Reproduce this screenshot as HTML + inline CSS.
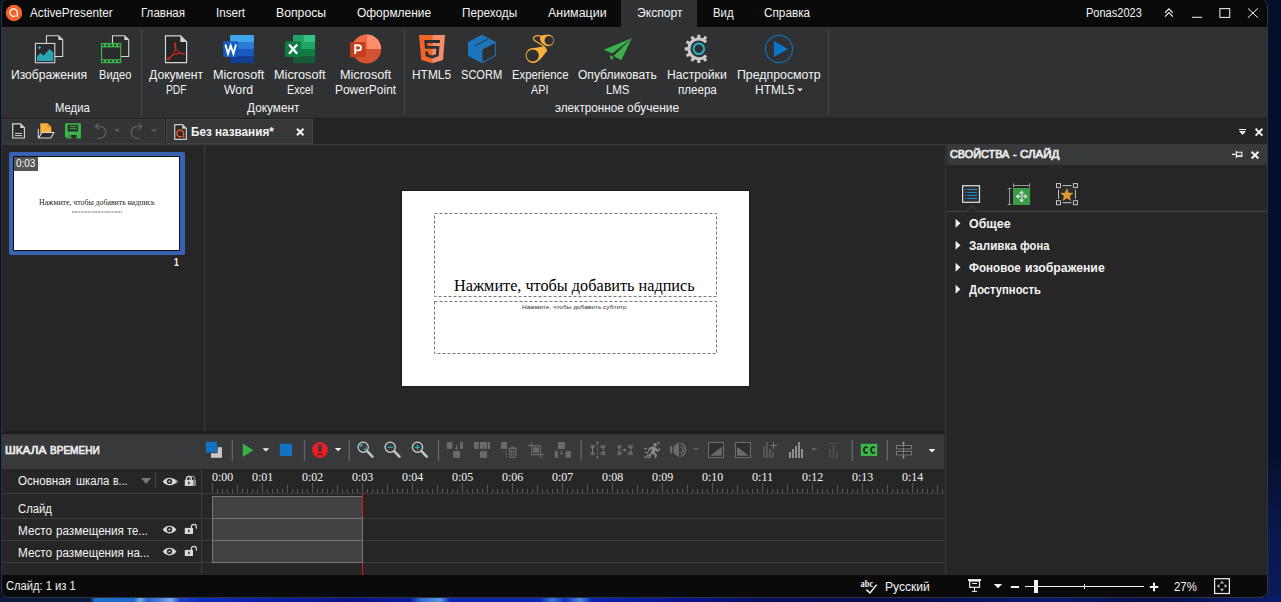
<!DOCTYPE html>
<html><head><meta charset="utf-8"><title>ActivePresenter</title>
<style>
*{margin:0;padding:0;box-sizing:border-box}
html,body{width:1281px;height:602px;overflow:hidden;background:#04102a;font-family:"Liberation Sans",sans-serif}
#wall{position:absolute;left:0;top:0;width:1281px;height:602px;background:#04102a}
#wallb{position:absolute;left:0;top:597px;width:1281px;height:5px;background:linear-gradient(90deg,#0a1a3c 0,#0a1a3c 90px,#1d6fd0 95px,#1c68cc 134px,#6fb4e0 140px,#2a62d0 147px,#4a7ad8 160px,#7ab0e6 171px,#1a40c8 180px,#0c2cc0 200px,#0a1ea8 260px,#08138a 350px,#0a1a9c 410px,#2a6ad0 420px,#5a9ae0 440px,#0a24b4 450px,#0a24b4 540px,#3a7ad8 552px,#0c2cc0 565px,#4a8ae0 580px,#0a22b0 592px,#0a1a9c 640px,#08128a 690px,#070f60 760px,#060d4a 900px,#091870 1040px,#060f4c 1150px,#0a1c6c 1281px)}
#wallr{position:absolute;left:1266px;top:0;width:15px;height:602px;background:linear-gradient(180deg,#04102a 0,#05112c 76%,#08184a 88%,#0b1d5a 100%)}
#win{position:absolute;left:1px;top:-2px;width:1267px;height:600px;border:1px solid #2d3542;border-radius:8px;overflow:hidden;background:#262626}
#win>*{position:absolute}
.abs{position:absolute}
.t{position:absolute;white-space:pre;transform-origin:0 50%;display:block}
svg{position:absolute;overflow:visible}
.r{font-family:"Liberation Serif",serif}
.b{font-weight:700}
.sb{-webkit-text-stroke:0.65px currentColor}

</style></head>
<body>
<div id="wall"></div><div id="wallr"></div><div id="wallb"></div>
<div id="win"><div style="left:-2px;top:1px;width:1281px;height:602px">
<!-- title bar -->
<div class="abs" style="left:0;top:0;width:1281px;height:27px;background:#0a0a0a"></div>
<div class="abs" style="left:621px;top:0;width:76px;height:28px;background:#303133"></div>
<!-- ribbon -->
<div class="abs" style="left:0;top:27px;width:1281px;height:91px;background:#303133"></div>
<div class="abs" style="left:0;top:27px;width:621px;height:1px;background:#353638"></div>
<div class="abs" style="left:697px;top:27px;width:600px;height:1px;background:#353638"></div>
<div class="abs" style="left:141px;top:30px;width:1px;height:85px;background:#47484a"></div>
<div class="abs" style="left:404px;top:30px;width:1px;height:85px;background:#47484a"></div>
<div class="abs" style="left:828px;top:30px;width:1px;height:85px;background:#47484a"></div>
<svg style="left:0;top:0" width="1281" height="602" viewBox="0 0 1281 602">
<!-- logo -->
<circle cx="14" cy="13" r="8.2" fill="#f4622a"/>
<path d="M15.4 15.8 A3.7 3.7 0 1 1 17.3 12.6 V16.9" fill="none" stroke="#fff" stroke-width="1.3"/>
<!-- images icon -->
<path d="M46.5 35.7 H58.7 L62.7 39.7 V56.5 H46.5 Z" fill="#2b2b2c" stroke="#d6d6d6" stroke-width="1.1"/>
<path d="M58.4 35.7 L62.7 40 H58.4 Z" fill="#d6d6d6"/>
<rect x="35.4" y="43.4" width="19.4" height="19.3" fill="#2b2b2c" stroke="#d6d6d6" stroke-width="1.1"/>
<path d="M37 61 V56.2 L40.7 52.9 L43.5 55.7 L49.5 49 L53.2 52.6 V61 Z" fill="#29a5b6"/>
<path d="M39.4 45.9 V49.3 M37.7 47.6 H41.1" stroke="#29a5b6" stroke-width="1"/>
<!-- video icon -->
<path d="M112.5 35.7 H124.7 L128.7 39.7 V56.5 H112.5 Z" fill="#2b2b2c" stroke="#d6d6d6" stroke-width="1.1"/>
<path d="M124.4 35.7 L128.7 40 H124.4 Z" fill="#d6d6d6"/>
<rect x="101" y="43" width="20.2" height="20.2" fill="#3cb54a"/>
<rect x="102.1" y="47.4" width="18" height="11.8" fill="#2b2b2c"/>
<g fill="#2b2b2c"><rect x="102.3" y="44.3" width="1.8" height="1.8"/><rect x="106.3" y="44.3" width="1.8" height="1.8"/><rect x="110.3" y="44.3" width="1.8" height="1.8"/><rect x="114.3" y="44.3" width="1.8" height="1.8"/><rect x="118.3" y="44.3" width="1.8" height="1.8"/>
<rect x="102.3" y="60.3" width="1.8" height="1.8"/><rect x="106.3" y="60.3" width="1.8" height="1.8"/><rect x="110.3" y="60.3" width="1.8" height="1.8"/><rect x="114.3" y="60.3" width="1.8" height="1.8"/><rect x="118.3" y="60.3" width="1.8" height="1.8"/></g>
<!-- pdf -->
<path d="M165.5 35.8 H180.6 L186.6 41.8 V62.6 H165.5 Z" fill="#262627" stroke="#d6d6d6" stroke-width="1.2"/>
<path d="M180.4 35.8 L186.6 42 H180.4 Z" fill="#d6d6d6"/>
<g fill="none" stroke="#e8291f" stroke-width="1" stroke-linecap="round"><path d="M174.7 42.7 C176.6 46.2 176.2 49.6 172 55.4 L168.4 59"/><path d="M174.9 42.9 C173.6 46.6 176.2 50.8 180.6 53.2 L184.2 54"/><path d="M168.6 58.4 C172 54.8 177.4 52.6 184 53.5"/><circle cx="168.6" cy="58.8" r="1.1"/></g>
<!-- word -->
<g><rect x="230.1" y="35" width="23.8" height="7.2" fill="#41a5ee"/><rect x="230.1" y="42" width="23.8" height="7.2" fill="#2b7cd3"/><rect x="230.1" y="49" width="23.8" height="7.2" fill="#185abd"/><rect x="230.1" y="56" width="23.8" height="7.1" fill="#103f91"/>
<rect x="223.1" y="41.2" width="15.2" height="15.9" rx="1.4" fill="#185abd"/>
<path d="M225.4 44.6 L228 53.8 L230.7 45.6 L233.4 53.8 L236 44.6" fill="none" stroke="#fff" stroke-width="1.9" stroke-linejoin="miter"/></g>
<!-- excel -->
<g><rect x="293" y="35" width="11" height="14.2" fill="#21a366"/><rect x="303.8" y="35" width="11.3" height="7.2" fill="#33c481"/><rect x="303.8" y="42" width="11.3" height="7.2" fill="#21a366"/><rect x="293" y="49" width="22.1" height="7.2" fill="#107c41"/><rect x="293" y="56" width="22.1" height="7.1" fill="#185c37"/>
<rect x="285" y="41.2" width="16.2" height="15.8" rx="1.4" fill="#107c41"/>
<path d="M289 44.4 L297.2 53.8 M297.2 44.4 L289 53.8" stroke="#fff" stroke-width="2.3"/></g>
<!-- powerpoint -->
<g><circle cx="366.6" cy="49" r="14.6" fill="#d35230"/><path d="M366.6 49 V34.4 A14.6 14.6 0 0 1 381.2 49 Z" fill="#ff8f6b"/><path d="M366.6 49 V34.4 A14.6 14.6 0 0 0 352 49 Z" fill="#ed6c47"/>
<rect x="350.1" y="42" width="15.5" height="15.3" rx="1.4" fill="#c43e1c"/>
<path d="M355.2 54 V45.2 H358.4 A2.6 2.6 0 0 1 358.4 50.4 H355.2" fill="none" stroke="#fff" stroke-width="1.9"/></g>
<!-- html5 -->
<g><path d="M419 35 H432.2 V63.3 L421.3 60.1 Z" fill="#f16529"/><path d="M432.2 35 H445 L443 60.1 L432.2 63.3 Z" fill="#f58d6c"/>
<path d="M424.2 40.1 H440 L439.8 42.9 H427.2 L427.5 45.9 H439.5 L438.6 56.3 L432.1 58.6 L425.6 56.3 L425.2 51.6 H428 L428.2 54.2 L432.1 55.5 L436 54.2 L436.4 48.7 H425 Z" fill="#2e2f31"/></g>
<!-- scorm -->
<g><path d="M482 34.7 L495.9 42 V55.8 L482 63.3 L468 55.8 V42 Z" fill="#1b75bc"/><path d="M482.4 49.4 L494.9 42.9 V55.3 L482.4 61.8 Z" fill="#2e2f31"/><path d="M475.3 45.6 L487.7 39.1" stroke="#2e2f31" stroke-width="1"/></g>
<!-- xapi -->
<g fill="none" stroke="#fbb03b">
<path d="M533.1 47.9 C537 47.9 541 46.6 543.6 46.2 L547 50.8 C545.4 53 541.8 58 539 60.6 Z" fill="#fbb03b" stroke="none"/>
<circle cx="533.1" cy="55.4" r="7.5" fill="#fbb03b" stroke="none"/>
<circle cx="532.7" cy="55.5" r="6.1" fill="#2e2f31" stroke="none"/>
<circle cx="548.1" cy="40.3" r="5.9" fill="#fbb03b" stroke="none"/>
<path d="M546 34.8 C543 34.6 541 35.6 540.2 37.2 C539.6 39.6 540.8 42.8 543.6 44.6 Z" fill="#fbb03b" stroke="none"/>
<circle cx="549" cy="40.4" r="4.4" fill="#2e2f31" stroke="none"/>
<path d="M541.5 36.1 C538 35.4 534.5 35.8 533.6 37.5 C532.8 39.1 534.4 40.6 537 42 C540.5 44 544.5 46.5 545.8 48.5 C546.6 49.7 546.6 50.6 546.2 51.5" stroke-width="1.2"/>
</g>
<!-- plane -->
<g fill="#3cb04a"><path d="M603.8 49.7 L632 38 L612.3 53.6 Z"/><path d="M632 38 L621.2 60.2 L613.5 55.9 Z"/><path d="M609.6 55 L613.8 57.3 L611.2 60.2 Z"/></g>
<!-- gear placeholder -->
<path d="M707.27 56.43 A11.4 11.4 0 1 1 707.27 41.17 L705.04 43.18 A8.4 8.4 0 1 0 705.04 54.42 Z M705.51 57.39 L707.23 60.23 L704.48 61.81 L702.88 58.91 Z M700.32 59.59 L700.38 62.91 L697.22 62.91 L697.28 59.59 Z M694.72 58.91 L693.12 61.81 L690.37 60.23 L692.09 57.39 Z M690.21 55.51 L687.37 57.23 L685.79 54.48 L688.69 52.88 Z M688.01 50.32 L684.69 50.38 L684.69 47.22 L688.01 47.28 Z M688.69 44.72 L685.79 43.12 L687.37 40.37 L690.21 42.09 Z M692.09 40.21 L690.37 37.37 L693.12 35.79 L694.72 38.69 Z M697.28 38.01 L697.22 34.69 L700.38 34.69 L700.32 38.01 Z M702.88 38.69 L704.48 35.79 L707.23 37.37 L705.51 40.21 Z " fill="#c9c9c9"/>
<circle cx="698.8" cy="48.8" r="5.3" fill="none" stroke="#29b6c9" stroke-width="2"/>
<!-- play -->
<circle cx="779" cy="49" r="13.6" fill="none" stroke="#0d6eb8" stroke-width="1.2"/>
<path d="M773.9 40.7 V57.2 L787.8 49 Z" fill="#0b74c8"/>
<path d="M797.2 88.6 H802.8 L800 91.4 Z" fill="#f2f2f2"/>
</svg>

<!-- toolbar row -->
<div class="abs" style="left:0;top:118px;width:1281px;height:27px;background:#242424"></div>
<div class="abs" style="left:0;top:118px;width:1281px;height:1px;background:#1e1e1e"></div>
<div class="abs" style="left:0;top:144px;width:946px;height:1px;background:#3a3a3a"></div>
<div class="abs" style="left:2px;top:119px;width:163px;height:25px;background:#333436;border:1px solid #3c3d3f;border-left:none"></div>
<div class="abs" style="left:166px;top:119px;width:147px;height:25px;background:#363739;border:1px solid #404143"></div>
<!-- main -->
<div class="abs" style="left:0;top:145px;width:1281px;height:288px;background:#262626"></div>
<div class="abs" style="left:204px;top:145px;width:1px;height:288px;background:#3a3a3a"></div>
<div class="abs" style="left:945px;top:145px;width:1px;height:430px;background:#3a3a3a"></div>

<!-- thumbnail -->
<div class="abs" style="left:9px;top:152px;width:176px;height:103px;background:#3a62b4;border-radius:2px"></div>
<div class="abs" style="left:13px;top:156px;width:167px;height:95px;background:#111"></div>
<div class="abs" style="left:14px;top:157px;width:165px;height:93px;background:#fff"></div>
<div class="abs" style="left:14px;top:157px;width:24px;height:14px;background:#555"></div>
<div class="abs" style="left:72px;top:210.6px;width:50px;height:2.2px;background:repeating-linear-gradient(90deg,#bbb 0,#aaa 1.5px,#e4e4e4 2px,#ccc 3.3px);opacity:.9"></div>
<!-- slide -->
<div class="abs" style="left:401px;top:190px;width:349px;height:197px;background:#1a1a1a"></div>
<div class="abs" style="left:402px;top:191px;width:347px;height:195px;background:#fff"></div>
<svg style="left:434px;top:213px" width="284" height="142" viewBox="0 0 284 142">
<rect x="0.5" y="0.5" width="282" height="83" fill="none" stroke="#777" stroke-width="1" stroke-dasharray="3 2"/>
<rect x="0.5" y="88.5" width="282" height="52" fill="none" stroke="#777" stroke-width="1" stroke-dasharray="3 2"/>
</svg>
<!-- right panel -->
<div class="abs" style="left:947px;top:144px;width:320px;height:21px;background:#38393b"></div>
<div class="abs" style="left:947px;top:211px;width:320px;height:1px;background:#444"></div>
<svg style="left:964px;top:204px" width="16" height="9" viewBox="0 0 16 9"><path d="M0 7.5 L2 7.5 L7.7 1.8 L13.4 7.5 L16 7.5" fill="#262626" stroke="#444" stroke-width="1"/><rect x="2.5" y="8" width="10.5" height="1.2" fill="#262626"/></svg>
<svg style="left:0;top:0" width="1281" height="602" viewBox="0 0 1281 602">
<!-- new doc -->
<path d="M12.7 123.9 H20.6 L24.4 127.7 V138 H12.7 Z" fill="#2a2b2c" stroke="#d6d6d6" stroke-width="1.2"/>
<path d="M20.3 123.9 L24.4 128 H20.3 Z" fill="#d6d6d6"/>
<path d="M15 133.4 H22.1 M15 135.6 H22.1" stroke="#d6d6d6" stroke-width="1"/>
<!-- open -->
<path d="M40.3 123.3 H47.6 L51.3 127 V133.6 H40.3 Z" fill="#fbb03b"/>
<path d="M47.4 123.3 L51.3 127.2 H47.4 Z" fill="#e08a1a"/>
<path d="M38.3 129 V138 H50.7 L53.9 132.5 H42 L38.6 138" fill="#2a2b2c" stroke="#d6d6d6" stroke-width="1.1" stroke-linejoin="miter"/>
<!-- save -->
<path d="M65 123.3 H80.9 V138.6 H67 L65 136.4 Z" fill="#3cb54a"/>
<rect x="67.7" y="124.9" width="10.4" height="6.6" fill="#2a2b2c"/>
<path d="M69.6 126.6 H76.8 M69.6 128.8 H76.8" stroke="#3cb54a" stroke-width="1"/>
<rect x="68.8" y="134.9" width="7.7" height="3.7" fill="#2a2b2c"/>
<rect x="69.4" y="134.9" width="1.7" height="3.7" fill="#3cb54a"/>
<!-- undo -->
<g fill="none" stroke="#5c5d5f" stroke-width="1.3"><path d="M96 126.3 H99.7 A6.05 6.05 0 0 1 99.7 138.4 H97.6"/><path d="M98.4 123.4 L95.4 126.3 L98.4 129.2"/>
<path d="M141 126.3 H137.3 A6.05 6.05 0 0 0 137.3 138.4 H139.4"/><path d="M138.6 123.4 L141.6 126.3 L138.6 129.2"/></g>
<path d="M114 129.3 H120 L117 132.3 Z M151 129.3 H157 L154 132.3 Z" fill="#5c5d5f"/>
<!-- doc tab icon -->
<path d="M174.7 124.6 H182.4 L186.3 128.5 V139.3 H174.7 Z" fill="#2a2b2c" stroke="#d0d0d0" stroke-width="1.2"/>
<path d="M182.2 124.6 L186.3 128.7 H182.2 Z" fill="#d0d0d0"/>
<path d="M181.8 136.4 A3.4 3.4 0 1 1 183.6 133.3 V137.7" fill="none" stroke="#f0582a" stroke-width="1.4"/>
<!-- tab close -->
<path d="M297 128.7 L303.5 135.2 M303.5 128.7 L297 135.2" stroke="#f2f2f2" stroke-width="2"/>
<!-- right controls -->
<rect x="1239" y="129" width="7" height="1" fill="#f2f2f2"/><path d="M1239 131 H1246 L1242.5 135 Z" fill="#f2f2f2"/>
<path d="M1255.6 128.8 L1262.4 135.6 M1262.4 128.8 L1255.6 135.6" stroke="#f2f2f2" stroke-width="2"/>
</svg>

<svg style="left:0;top:0" width="1281" height="602" viewBox="0 0 1281 602">
<!-- pin -->
<path d="M1232 154.4 H1236.2 M1236.4 150.8 V158 M1236.4 152.3 H1241.8 V156.2 H1236.4" fill="none" stroke="#f2f2f2" stroke-width="1.1"/>
<rect x="1236.4" y="155.4" width="6" height="1.4" fill="#f2f2f2"/>
<path d="M1251.6 151.7 L1258.4 158.5 M1258.4 151.7 L1251.6 158.5" stroke="#f2f2f2" stroke-width="2"/>
<!-- icon1 list -->
<rect x="962.6" y="185.7" width="16.9" height="16.6" fill="#303031" stroke="#e0e0e0" stroke-width="1.2"/>
<g stroke="#1e8ad6" stroke-width="1"><path d="M967.3 189.5 H977 M967.3 192.5 H977 M967.3 195.5 H977 M967.3 198.5 H977"/><path d="M965 189.5 H966 M965 192.5 H966 M965 195.5 H966 M965 198.5 H966"/></g>
<!-- icon2 size -->
<rect x="1013" y="188" width="17.1" height="17" fill="#3a9c47"/>
<g stroke="#9a9a9a" stroke-width="1" fill="none"><path d="M1013.5 185.5 H1029.6 M1013.5 183.4 V187.4 M1029.6 183.4 V187.4"/><path d="M1009.5 188.5 V204.5 M1007.6 188.5 H1011.4 M1007.6 204.5 H1011.4"/></g>
<g fill="#dcdcdc"><path d="M1021.6 190.4 L1024.2 193.4 H1022.3 V195.7 H1024.6 V193.8 L1027.6 196.4 L1024.6 199 V197.1 H1022.3 V199.4 H1024.2 L1021.6 202.4 L1019 199.4 H1020.9 V197.1 H1018.6 V199 L1015.6 196.4 L1018.6 193.8 V195.7 H1020.9 V193.4 H1019 Z"/></g>
<rect x="1020.9" y="195.7" width="1.4" height="1.4" fill="#3a9c47"/>
<!-- icon3 star -->
<g fill="none" stroke="#c8c8c8" stroke-width="1"><rect x="1056.5" y="183.6" width="4" height="4"/><rect x="1073.4" y="183.6" width="4" height="4"/><rect x="1056.5" y="200.7" width="4" height="4"/><rect x="1073.4" y="200.7" width="4" height="4"/>
<path d="M1062.5 185.6 H1071.5 M1062.5 202.7 H1071.5 M1058.5 189.6 V198.8 M1075.4 189.6 V198.8"/></g>
<rect x="1060.6" y="187.8" width="12.8" height="12.8" fill="#2e2e2f"/>
<path d="M1066.9 188 L1068.7 192.7 L1073.6 192.9 L1069.8 196.1 L1071.1 200.9 L1066.9 198.2 L1062.7 200.9 L1064 196.1 L1060.2 192.9 L1065.1 192.7 Z" fill="#e09a2d"/>
<!-- tree arrows -->
<path d="M955.6 218.8 L960.4 223.3 L955.6 227.8 Z M955.6 240.8 L960.4 245.3 L955.6 249.8 Z M955.6 262.8 L960.4 267.3 L955.6 271.8 Z M955.6 284.8 L960.4 289.3 L955.6 293.8 Z" fill="#f2f2f2"/>
</svg>


<!-- timeline -->
<div class="abs" style="left:0;top:431px;width:945px;height:3px;background:#1e1e1e"></div>
<div class="abs" style="left:0;top:434px;width:944px;height:35px;background:#38393b"></div>
<div class="abs" style="left:0;top:469px;width:944px;height:106px;background:#262626"></div>

<div class="abs" style="left:201px;top:469px;width:1px;height:106px;background:#3c3c3c"></div>
<div class="abs" style="left:0;top:493px;width:944px;height:1px;background:#3c3c3c"></div>
<div class="abs" style="left:0;top:518px;width:944px;height:1px;background:#3c3c3c"></div>
<div class="abs" style="left:0;top:540px;width:944px;height:1px;background:#3c3c3c"></div>
<div class="abs" style="left:0;top:562px;width:944px;height:1px;background:#3c3c3c"></div>
<svg style="left:0;top:0" width="944" height="500" viewBox="0 0 944 500" fill="#565656" shape-rendering="crispEdges"><rect x="212" y="483" width="1" height="10"/><rect x="217" y="489" width="1" height="4"/><rect x="222" y="489" width="1" height="4"/><rect x="227" y="489" width="1" height="4"/><rect x="232" y="489" width="1" height="4"/><rect x="237" y="485" width="1" height="8"/><rect x="242" y="489" width="1" height="4"/><rect x="247" y="489" width="1" height="4"/><rect x="252" y="489" width="1" height="4"/><rect x="257" y="489" width="1" height="4"/><rect x="262" y="483" width="1" height="10"/><rect x="267" y="489" width="1" height="4"/><rect x="272" y="489" width="1" height="4"/><rect x="277" y="489" width="1" height="4"/><rect x="282" y="489" width="1" height="4"/><rect x="287" y="485" width="1" height="8"/><rect x="292" y="489" width="1" height="4"/><rect x="297" y="489" width="1" height="4"/><rect x="302" y="489" width="1" height="4"/><rect x="307" y="489" width="1" height="4"/><rect x="312" y="483" width="1" height="10"/><rect x="317" y="489" width="1" height="4"/><rect x="322" y="489" width="1" height="4"/><rect x="327" y="489" width="1" height="4"/><rect x="332" y="489" width="1" height="4"/><rect x="337" y="485" width="1" height="8"/><rect x="342" y="489" width="1" height="4"/><rect x="347" y="489" width="1" height="4"/><rect x="352" y="489" width="1" height="4"/><rect x="357" y="489" width="1" height="4"/><rect x="362" y="483" width="1" height="10"/><rect x="367" y="489" width="1" height="4"/><rect x="372" y="489" width="1" height="4"/><rect x="377" y="489" width="1" height="4"/><rect x="382" y="489" width="1" height="4"/><rect x="387" y="485" width="1" height="8"/><rect x="392" y="489" width="1" height="4"/><rect x="397" y="489" width="1" height="4"/><rect x="402" y="489" width="1" height="4"/><rect x="407" y="489" width="1" height="4"/><rect x="412" y="483" width="1" height="10"/><rect x="417" y="489" width="1" height="4"/><rect x="422" y="489" width="1" height="4"/><rect x="427" y="489" width="1" height="4"/><rect x="432" y="489" width="1" height="4"/><rect x="437" y="485" width="1" height="8"/><rect x="442" y="489" width="1" height="4"/><rect x="447" y="489" width="1" height="4"/><rect x="452" y="489" width="1" height="4"/><rect x="457" y="489" width="1" height="4"/><rect x="462" y="483" width="1" height="10"/><rect x="467" y="489" width="1" height="4"/><rect x="472" y="489" width="1" height="4"/><rect x="477" y="489" width="1" height="4"/><rect x="482" y="489" width="1" height="4"/><rect x="487" y="485" width="1" height="8"/><rect x="492" y="489" width="1" height="4"/><rect x="497" y="489" width="1" height="4"/><rect x="502" y="489" width="1" height="4"/><rect x="507" y="489" width="1" height="4"/><rect x="512" y="483" width="1" height="10"/><rect x="517" y="489" width="1" height="4"/><rect x="522" y="489" width="1" height="4"/><rect x="527" y="489" width="1" height="4"/><rect x="532" y="489" width="1" height="4"/><rect x="537" y="485" width="1" height="8"/><rect x="542" y="489" width="1" height="4"/><rect x="547" y="489" width="1" height="4"/><rect x="552" y="489" width="1" height="4"/><rect x="557" y="489" width="1" height="4"/><rect x="562" y="483" width="1" height="10"/><rect x="567" y="489" width="1" height="4"/><rect x="572" y="489" width="1" height="4"/><rect x="577" y="489" width="1" height="4"/><rect x="582" y="489" width="1" height="4"/><rect x="587" y="485" width="1" height="8"/><rect x="592" y="489" width="1" height="4"/><rect x="597" y="489" width="1" height="4"/><rect x="602" y="489" width="1" height="4"/><rect x="607" y="489" width="1" height="4"/><rect x="612" y="483" width="1" height="10"/><rect x="617" y="489" width="1" height="4"/><rect x="622" y="489" width="1" height="4"/><rect x="627" y="489" width="1" height="4"/><rect x="632" y="489" width="1" height="4"/><rect x="637" y="485" width="1" height="8"/><rect x="642" y="489" width="1" height="4"/><rect x="647" y="489" width="1" height="4"/><rect x="652" y="489" width="1" height="4"/><rect x="657" y="489" width="1" height="4"/><rect x="662" y="483" width="1" height="10"/><rect x="667" y="489" width="1" height="4"/><rect x="672" y="489" width="1" height="4"/><rect x="677" y="489" width="1" height="4"/><rect x="682" y="489" width="1" height="4"/><rect x="687" y="485" width="1" height="8"/><rect x="692" y="489" width="1" height="4"/><rect x="697" y="489" width="1" height="4"/><rect x="702" y="489" width="1" height="4"/><rect x="707" y="489" width="1" height="4"/><rect x="712" y="483" width="1" height="10"/><rect x="717" y="489" width="1" height="4"/><rect x="722" y="489" width="1" height="4"/><rect x="727" y="489" width="1" height="4"/><rect x="732" y="489" width="1" height="4"/><rect x="737" y="485" width="1" height="8"/><rect x="742" y="489" width="1" height="4"/><rect x="747" y="489" width="1" height="4"/><rect x="752" y="489" width="1" height="4"/><rect x="757" y="489" width="1" height="4"/><rect x="762" y="483" width="1" height="10"/><rect x="767" y="489" width="1" height="4"/><rect x="772" y="489" width="1" height="4"/><rect x="777" y="489" width="1" height="4"/><rect x="782" y="489" width="1" height="4"/><rect x="787" y="485" width="1" height="8"/><rect x="792" y="489" width="1" height="4"/><rect x="797" y="489" width="1" height="4"/><rect x="802" y="489" width="1" height="4"/><rect x="807" y="489" width="1" height="4"/><rect x="812" y="483" width="1" height="10"/><rect x="817" y="489" width="1" height="4"/><rect x="822" y="489" width="1" height="4"/><rect x="827" y="489" width="1" height="4"/><rect x="832" y="489" width="1" height="4"/><rect x="837" y="485" width="1" height="8"/><rect x="842" y="489" width="1" height="4"/><rect x="847" y="489" width="1" height="4"/><rect x="852" y="489" width="1" height="4"/><rect x="857" y="489" width="1" height="4"/><rect x="862" y="483" width="1" height="10"/><rect x="867" y="489" width="1" height="4"/><rect x="872" y="489" width="1" height="4"/><rect x="877" y="489" width="1" height="4"/><rect x="882" y="489" width="1" height="4"/><rect x="887" y="485" width="1" height="8"/><rect x="892" y="489" width="1" height="4"/><rect x="897" y="489" width="1" height="4"/><rect x="902" y="489" width="1" height="4"/><rect x="907" y="489" width="1" height="4"/><rect x="912" y="483" width="1" height="10"/><rect x="917" y="489" width="1" height="4"/><rect x="922" y="489" width="1" height="4"/><rect x="927" y="489" width="1" height="4"/><rect x="932" y="489" width="1" height="4"/><rect x="937" y="485" width="1" height="8"/><rect x="942" y="489" width="1" height="4"/></svg>
<div class="abs" style="left:212px;top:496px;width:151px;height:67px;background:#424242;border:1px solid #777"></div>
<div class="abs" style="left:212px;top:518px;width:151px;height:1px;background:#777"></div>
<div class="abs" style="left:212px;top:540px;width:151px;height:1px;background:#777"></div>
<div class="abs" style="left:362px;top:494px;width:1px;height:22px;background:#e81414"></div>
<div class="abs" style="left:362px;top:563px;width:1px;height:12px;background:#e81414"></div>
<div class="abs" style="left:155px;top:472px;width:1px;height:16px;background:#444"></div>
<svg style="left:0;top:0" width="1281" height="602" viewBox="0 0 1281 602">
<!-- separators -->
<g fill="#626365"><rect x="231.6" y="440" width="1.4" height="21"/><rect x="303.8" y="440" width="1.4" height="21"/><rect x="348.6" y="440" width="1.4" height="21"/><rect x="437.8" y="440" width="1.4" height="21"/><rect x="580.4" y="440" width="1.4" height="21"/><rect x="851.6" y="440" width="1.4" height="21"/><rect x="886.6" y="440" width="1.4" height="21"/></g>
<!-- layers icon -->
<rect x="211" y="447.2" width="11" height="10.6" fill="#c8c8c8"/>
<rect x="205" y="441.2" width="12.6" height="12" fill="#38393b"/>
<rect x="205.7" y="441.8" width="11.2" height="10.7" fill="#1273c4"/>
<!-- play -->
<path d="M242.8 443.6 V457 L253.4 450.3 Z" fill="#3cb043"/>
<path d="M262.6 448.3 H269.2 L265.9 451.4 Z" fill="#f2f2f2"/>
<rect x="279.9" y="443.7" width="12.1" height="12.3" fill="#1273c4"/>
<!-- record -->
<circle cx="320" cy="450" r="7.9" fill="#ee1c24"/>
<rect x="318.2" y="444.2" width="3.6" height="7.5" rx="1.6" fill="#3a3b3d"/>
<rect x="317.2" y="453.8" width="5.6" height="1" fill="#3a2a2c"/><rect x="319.2" y="453" width="1.6" height="1" fill="#3a2a2c"/>
<path d="M334.8 448.1 H341.3 L338.05 451.3 Z" fill="#f2f2f2"/>
<!-- zoom icons -->
<g fill="none" stroke="#d0d0d0" stroke-width="1.3"><circle cx="363.2" cy="447.2" r="5.1"/><circle cx="390.2" cy="447.2" r="5.1"/><circle cx="417.5" cy="447.2" r="5.1"/></g>
<g stroke="#c4c4c4" stroke-width="2.6" stroke-linecap="round"><path d="M367.4 451.4 L372.4 456.6 M394.4 451.4 L399.4 456.6 M421.7 451.4 L426.7 456.6"/></g>
<g stroke="#29b6c9" stroke-width="1.1" fill="none"><path d="M360.8 447 V444.9 H363 M365.6 447.4 V449.5 H363.4"/><path d="M387.6 447.2 H392.8"/><path d="M414.9 447.2 H420.1 M417.5 444.6 V449.8"/></g>
<!-- edit group (disabled gray) -->
<g fill="#6a6a6b">
<rect x="446.9" y="442" width="5.4" height="6.9"/><rect x="460.2" y="442" width="2.8" height="6.9"/><rect x="453.1" y="451.1" width="6.9" height="6.8"/><path d="M456 445 H457 V448 H458.4 L456.5 450 L454.6 448 H456 Z"/>
<rect x="473.9" y="442" width="4.9" height="6.9"/><rect x="479.9" y="442" width="7.1" height="6.9"/><rect x="487.8" y="442" width="2.2" height="6.9"/><rect x="479.9" y="451.1" width="7.1" height="6.8"/>
<rect x="501" y="442" width="6" height="6.9"/><rect x="505.8" y="450.3" width="1" height="1.8"/><rect x="505.8" y="453.2" width="1" height="1.8"/><rect x="505.8" y="456.1" width="1" height="1.8"/>
<rect x="558" y="442" width="6.9" height="6.9"/><rect x="554.8" y="451.1" width="3" height="6.8"/><rect x="565.5" y="451.1" width="5.4" height="6.8"/><path d="M561 450 H562 V453 H563.4 L561.5 455 L559.6 453 H561 Z"/>
<rect x="533.1" y="447.3" width="5.8" height="5.6"/>
</g>
<path d="M483 445 H484 V448 H485.4 L483.5 450 L481.6 448 H483 Z" fill="#555"/>
<g fill="none" stroke="#6a6a6b" stroke-width="1.1"><path d="M531.6 442 V454.6 H543.8 M528 445.6 H540.5 V457.9"/>
<path d="M509.6 448.4 H515.8 V456.6 A0.8 0.8 0 0 1 515 457.4 H510.4 A0.8 0.8 0 0 1 509.6 456.6 Z M508.4 448.2 H517 M511 447.2 H514.4 M511.7 450 V455.8 M513.7 450 V455.8"/></g>
<!-- film split icons -->
<g fill="none" stroke="#767677" stroke-width="1"><path d="M590 445.8 H595 M590 454.3 H595 M592.5 445.8 V454.3 M590.5 447.6 H594.5 M590.5 452.5 H594.5"/><path d="M600.2 445.8 H605.6 M600.2 454.3 H605.6 M603.6 445.8 V454.3 M600.6 447.6 H605.2 M600.6 452.5 H605.2"/>
<path d="M597.4 444 V456" stroke-dasharray="1 1"/><path d="M596 442.6 H598.8 M597.4 441.4 V443.8 M596 457.2 H598.8 M597.4 456 V458.4"/>
<path d="M617.2 445.8 H621.8 M617.2 454.3 H621.8 M619.2 445.8 V454.3 M617.6 447.6 H621.4 M617.6 452.5 H621.4"/><path d="M627.6 445.8 H633 M627.6 454.3 H633 M631 445.8 V454.3 M628 447.6 H632.6 M628 452.5 H632.6"/></g>
<path d="M621.8 449.5 H624 V448 L626.4 450 L624 452 V450.5 H621.8 Z" fill="#767677"/>
<!-- runner -->
<g fill="#8c8c8d"><circle cx="655.2" cy="444.6" r="1.7"/><path d="M649.5 447.6 L653.6 446.2 L656.4 447.8 L657.4 450 L659.8 448 L660.6 449 L657.6 452 L655.4 450.4 L654.4 452.6 L657 454.6 L656.2 458 H654.6 L655 455.4 L652 453.4 L651 455.8 H646.6 V454.4 H650 L652.4 448.8 L650.2 449.4 L649 451.6 L647.8 451 Z"/>
<rect x="644" y="448.2" width="3" height="1"/><rect x="645" y="452" width="3.4" height="1"/><rect x="644" y="456.6" width="7" height="1.1"/><path d="M658.4 441.4 L658.9 442.6 L660.1 443.1 L658.9 443.6 L658.4 444.8 L657.9 443.6 L656.7 443.1 L657.9 442.6 Z"/></g>
<!-- speaker -->
<g fill="#6a6a6b"><rect x="670" y="446.2" width="2" height="7"/><path d="M673.4 446.6 L679 442 V457.6 L673.4 453 Z"/></g>
<g fill="none" stroke="#6a6a6b" stroke-width="1.5"><path d="M680.6 446.4 A3.6 3.6 0 0 1 680.6 453.2"/><path d="M680.8 443.2 A7 7 0 0 1 680.8 456.4"/></g>
<path d="M693 448 H699 L696 451 Z M811 448 H817 L814 451 Z" fill="#5e5e5f"/>
<!-- fades -->
<rect x="708.5" y="442.5" width="15" height="15" fill="#2f2f30" stroke="#6e6e6f" stroke-width="1"/><path d="M710.2 455.8 H721.8 V446.8 Z" fill="#6a6a6b"/>
<rect x="735.4" y="442.5" width="15" height="15" fill="#2f2f30" stroke="#6e6e6f" stroke-width="1"/><path d="M737 446.8 V455.8 H748.8 Z" fill="#6a6a6b"/>
<!-- bars -->
<g fill="#565657"><rect x="763" y="446" width="2" height="12"/><rect x="766" y="442" width="2" height="16"/><rect x="769" y="449" width="2" height="9"/><rect x="772" y="452" width="2" height="6"/></g>
<path d="M773.6 442.2 V448.8 M770.4 445.5 H776.8" stroke="#7a7a7b" stroke-width="1"/>
<g fill="#8e8e8f"><rect x="789" y="452" width="2" height="6"/><rect x="792" y="449" width="2" height="9"/><rect x="795" y="446" width="2" height="12"/><rect x="798" y="442" width="2" height="16"/><rect x="801" y="449" width="2" height="9"/></g>
<g fill="#4d4d4e"><rect x="828" y="443" width="10" height="1"/><rect x="829" y="449" width="2" height="9"/><rect x="832.5" y="445" width="2" height="13"/><rect x="836" y="452" width="2" height="6"/><rect x="839.5" y="442.5" width="1" height="1"/></g>
<!-- CC -->
<rect x="860.8" y="443.8" width="16.4" height="12.2" fill="#3cb54a"/>
<g fill="none" stroke="#1c261d" stroke-width="1.7"><path d="M867.6 448 A2.1 3 0 1 0 867.6 452"/><path d="M874.8 448 A2.1 3 0 1 0 874.8 452"/></g>
<!-- align icon -->
<g fill="#2c2c2d" stroke="#7a7a7b" stroke-width="1"><rect x="896.5" y="445.5" width="15" height="3.4"/><rect x="896.5" y="451.5" width="15" height="3.4"/></g>
<path d="M903.5 443.5 V457" stroke="#9a9a9b" stroke-width="1" stroke-dasharray="1.2 1"/><path d="M902.2 443 H904.8 M903.5 441.8 V444.2 M902.2 457.2 H904.8 M903.5 456 V458.4" stroke="#9a9a9b" stroke-width="1"/>
<path d="M928.7 449 H935.3 L932 452.4 Z" fill="#f2f2f2"/>
<!-- track column icons -->
<path d="M141 478 H151.2 L146.1 484 Z" fill="#77787a"/>
<!-- eyes -->
<g id="eye0"><path d="M165.2 481.6 C167.4 477.6 175.8 477.6 178.2 481.6 C175.8 485.8 167.4 485.8 165.2 481.6 Z" fill="#8a8a8a"/><path d="M162.8 481.5 C165.6 476.4 173.6 476.4 176.3 481.5 C173.6 486.6 165.6 486.6 162.8 481.5 Z" fill="#dadada"/><circle cx="169.5" cy="481.4" r="2.7" fill="#2a2a2a"/><circle cx="169.5" cy="481.4" r="1" fill="#dadada"/></g>
<g><path d="M162.8 529.6 C165.6 524.5 173.6 524.5 176.3 529.6 C173.6 534.7 165.6 534.7 162.8 529.6 Z" fill="#dadada"/><circle cx="169.5" cy="529.5" r="2.7" fill="#2a2a2a"/><circle cx="169.5" cy="529.5" r="1" fill="#dadada"/></g>
<g><path d="M162.8 551.6 C165.6 546.5 173.6 546.5 176.3 551.6 C173.6 556.7 165.6 556.7 162.8 551.6 Z" fill="#dadada"/><circle cx="169.5" cy="551.5" r="2.7" fill="#2a2a2a"/><circle cx="169.5" cy="551.5" r="1" fill="#dadada"/></g>
<!-- locks -->
<g><rect x="188" y="479.9" width="8" height="6" fill="#8a8a8a"/><path d="M189.6 480 V478.6 A2.5 2.5 0 0 1 194.6 478.6 V480" fill="none" stroke="#8a8a8a" stroke-width="1.2"/>
<rect x="184.8" y="479.9" width="8.2" height="6" fill="#dadada"/><path d="M186.4 480 V478.8 A2.5 2.5 0 0 1 191.4 478.8 V480" fill="none" stroke="#dadada" stroke-width="1.3"/><rect x="188.2" y="481.6" width="1.4" height="2.6" fill="#2a2a2a"/></g>
<g><rect x="184.8" y="527.9" width="8.2" height="6.1" fill="#dadada"/><path d="M191.4 528 V526.8 A2.5 2.5 0 0 1 196.4 526.8 V528.4" fill="none" stroke="#dadada" stroke-width="1.2"/><rect x="188.2" y="529.6" width="1.4" height="2.6" fill="#2a2a2a"/></g>
<g><rect x="184.8" y="549.9" width="8.2" height="6.1" fill="#dadada"/><path d="M191.4 550 V548.8 A2.5 2.5 0 0 1 196.4 548.8 V550.4" fill="none" stroke="#dadada" stroke-width="1.2"/><rect x="188.2" y="551.6" width="1.4" height="2.6" fill="#2a2a2a"/></g>
</svg>


<!-- status -->
<div class="abs" style="left:0;top:575px;width:1281px;height:27px;background:#0a0a0a"></div>
<svg style="left:0;top:0" width="1281" height="602" viewBox="0 0 1281 602">
<!-- window controls -->
<g fill="none" stroke="#f2f2f2" stroke-width="1.2"><path d="M1165 12.8 L1168.9 8.9 L1172.8 12.8 M1165 16.6 L1168.9 12.7 L1172.8 16.6"/></g>
<rect x="1192" y="16.8" width="10" height="1" fill="#f2f2f2"/>
<rect x="1219.9" y="8.6" width="9.8" height="8.8" fill="none" stroke="#f2f2f2" stroke-width="1"/>
<path d="M1247.9 8.4 L1257.9 17.7 M1257.9 8.4 L1247.9 17.7" stroke="#f2f2f2" stroke-width="1"/>
<!-- abc check -->
<text x="860.6" y="586.9" font-family="'Liberation Serif',serif" font-size="9.5" font-weight="700" fill="#f2f2f2" textLength="12.6" lengthAdjust="spacingAndGlyphs">abc</text>
<path d="M866.3 589.6 L870 593 L876.7 584.6" fill="none" stroke="#f2f2f2" stroke-width="1.5"/>
<!-- presentation -->
<rect x="968" y="579.1" width="13.1" height="1.9" fill="#f2f2f2"/>
<rect x="969.7" y="581" width="9.8" height="6.3" fill="none" stroke="#f2f2f2" stroke-width="1.2"/>
<path d="M972.2 583.5 H977 M974.5 587.8 V591 M971.9 591.4 H977" stroke="#f2f2f2" stroke-width="1"/>
<path d="M993.8 584.1 H1002.2 L998 588.3 Z" fill="#f2f2f2"/>
<rect x="1010.8" y="586" width="8.2" height="2" fill="#f2f2f2"/>
<rect x="1025" y="586" width="119" height="1" fill="#f2f2f2"/>
<rect x="1034" y="580" width="4" height="13" fill="#f2f2f2"/>
<rect x="1084" y="584" width="1" height="5" fill="#f2f2f2"/>
<path d="M1149.8 587 H1158.2 M1154 582.8 V591.2" stroke="#f2f2f2" stroke-width="2"/>
<rect x="1214.6" y="578.7" width="14.8" height="14.8" fill="none" stroke="#f2f2f2" stroke-width="1.2"/>
<path d="M1222 580.8 L1224 583.4 H1220 Z M1222 591.4 L1224 588.8 H1220 Z M1216.8 586.1 L1219.4 584.1 V588.1 Z M1227.2 586.1 L1224.6 584.1 V588.1 Z" fill="#c4c4c4"/>
</svg>


</div></div>

<span class="t" style="left:29.7px;top:6.00px;font-size:12px;line-height:14px;color:#f4f4f4;transform:scaleX(0.9752)">ActivePresenter</span>
<span class="t" style="left:141.2px;top:6.00px;font-size:12px;line-height:14px;color:#f4f4f4;transform:scaleX(0.9653)">Главная</span>
<span class="t" style="left:216.2px;top:6.00px;font-size:12px;line-height:14px;color:#f4f4f4;transform:scaleX(0.9695)">Insert</span>
<span class="t" style="left:276.2px;top:6.00px;font-size:12px;line-height:14px;color:#f4f4f4;transform:scaleX(1.0192)">Вопросы</span>
<span class="t" style="left:357.2px;top:6.00px;font-size:12px;line-height:14px;color:#f4f4f4;transform:scaleX(0.9948)">Оформление</span>
<span class="t" style="left:462.2px;top:6.00px;font-size:12px;line-height:14px;color:#f4f4f4;transform:scaleX(0.9787)">Переходы</span>
<span class="t" style="left:547.7px;top:6.00px;font-size:12px;line-height:14px;color:#f4f4f4;transform:scaleX(1.0363)">Анимации</span>
<span class="t" style="left:636.7px;top:6.00px;font-size:12px;line-height:14px;color:#f4f4f4;transform:scaleX(1.0112)">Экспорт</span>
<span class="t" style="left:712.7px;top:6.00px;font-size:12px;line-height:14px;color:#f4f4f4;transform:scaleX(0.9485)">Вид</span>
<span class="t" style="left:764.2px;top:6.00px;font-size:12px;line-height:14px;color:#f4f4f4;transform:scaleX(0.9792)">Справка</span>
<span class="t" style="left:1085.9px;top:6.00px;font-size:12px;line-height:14px;color:#f4f4f4;transform:scaleX(0.9188)">Ponas2023</span>
<span class="t" style="left:11.1px;top:68.00px;font-size:12px;line-height:14px;color:#f4f4f4;transform:scaleX(1.0090)">Изображения</span>
<span class="t" style="left:99.4px;top:68.00px;font-size:12px;line-height:14px;color:#f4f4f4;transform:scaleX(0.9241)">Видео</span>
<span class="t" style="left:148.9px;top:68.00px;font-size:12px;line-height:14px;color:#f4f4f4;transform:scaleX(1.0144)">Документ</span>
<span class="t" style="left:213.1px;top:68.00px;font-size:12px;line-height:14px;color:#f4f4f4;transform:scaleX(1.0516)">Microsoft</span>
<span class="t" style="left:274.0px;top:68.00px;font-size:12px;line-height:14px;color:#f4f4f4;transform:scaleX(1.0598)">Microsoft</span>
<span class="t" style="left:340.0px;top:68.00px;font-size:12px;line-height:14px;color:#f4f4f4;transform:scaleX(1.0537)">Microsoft</span>
<span class="t" style="left:412.2px;top:68.00px;font-size:12px;line-height:14px;color:#f4f4f4;transform:scaleX(0.9938)">HTML5</span>
<span class="t" style="left:461.0px;top:68.00px;font-size:12px;line-height:14px;color:#f4f4f4;transform:scaleX(0.9223)">SCORM</span>
<span class="t" style="left:512.0px;top:68.00px;font-size:12px;line-height:14px;color:#f4f4f4;transform:scaleX(0.9409)">Experience</span>
<span class="t" style="left:578.3px;top:68.00px;font-size:12px;line-height:14px;color:#f4f4f4;transform:scaleX(1.0042)">Опубликовать</span>
<span class="t" style="left:667.2px;top:68.00px;font-size:12px;line-height:14px;color:#f4f4f4;transform:scaleX(1.0146)">Настройки</span>
<span class="t" style="left:736.7px;top:68.00px;font-size:12px;line-height:14px;color:#f4f4f4;transform:scaleX(1.0284)">Предпросмотр</span>
<span class="t" style="left:166.3px;top:83.00px;font-size:12px;line-height:14px;color:#f4f4f4;transform:scaleX(0.8583)">PDF</span>
<span class="t" style="left:224.3px;top:83.00px;font-size:12px;line-height:14px;color:#f4f4f4;transform:scaleX(1.0227)">Word</span>
<span class="t" style="left:287.2px;top:83.00px;font-size:12px;line-height:14px;color:#f4f4f4;transform:scaleX(0.8929)">Excel</span>
<span class="t" style="left:335.0px;top:83.00px;font-size:12px;line-height:14px;color:#f4f4f4;transform:scaleX(0.9955)">PowerPoint</span>
<span class="t" style="left:531.2px;top:83.00px;font-size:12px;line-height:14px;color:#f4f4f4;transform:scaleX(0.8995)">API</span>
<span class="t" style="left:606.3px;top:83.00px;font-size:12px;line-height:14px;color:#f4f4f4;transform:scaleX(0.9519)">LMS</span>
<span class="t" style="left:678.4px;top:83.00px;font-size:12px;line-height:14px;color:#f4f4f4;transform:scaleX(0.9651)">плеера</span>
<span class="t" style="left:754.9px;top:83.00px;font-size:12px;line-height:14px;color:#f4f4f4;transform:scaleX(0.9989)">HTML5</span>
<span class="t" style="left:55.3px;top:101.00px;font-size:12px;line-height:14px;color:#f4f4f4;transform:scaleX(0.9398)">Медиа</span>
<span class="t" style="left:246.8px;top:101.00px;font-size:12px;line-height:14px;color:#f4f4f4;transform:scaleX(0.9843)">Документ</span>
<span class="t" style="left:554.6px;top:101.00px;font-size:12px;line-height:14px;color:#f4f4f4;transform:scaleX(0.9790)">электронное</span>
<span class="t" style="left:627.1px;top:101.00px;font-size:12px;line-height:14px;color:#f4f4f4;transform:scaleX(0.9996)">обучение</span>
<span class="t b" style="left:191.1px;top:125.00px;font-size:12px;line-height:14px;color:#f4f4f4;transform:scaleX(0.9761)">Без названия*</span>
<span class="t sb" style="left:950.0px;top:148.00px;font-size:11.5px;line-height:12px;color:#f0f0f0;transform:scaleX(0.9451)">СВОЙСТВА</span>
<span class="t sb" style="left:1013.0px;top:148.00px;font-size:11.5px;line-height:12px;color:#f0f0f0;transform:scaleX(0.9561)">-</span>
<span class="t sb" style="left:1019.7px;top:148.00px;font-size:11.5px;line-height:12px;color:#f0f0f0;transform:scaleX(1.0069)">СЛАЙД</span>
<span class="t b" style="left:968.9px;top:217.00px;font-size:12px;line-height:14px;color:#f4f4f4;transform:scaleX(1.0343)">Общее</span>
<span class="t b" style="left:968.9px;top:239.00px;font-size:12px;line-height:14px;color:#f4f4f4;transform:scaleX(0.9685)">Заливка</span>
<span class="t b" style="left:1020.0px;top:239.00px;font-size:12px;line-height:14px;color:#f4f4f4;transform:scaleX(0.9306)">фона</span>
<span class="t b" style="left:968.9px;top:261.00px;font-size:12px;line-height:14px;color:#f4f4f4;transform:scaleX(0.9686)">Фоновое</span>
<span class="t b" style="left:1024.6px;top:261.00px;font-size:12px;line-height:14px;color:#f4f4f4;transform:scaleX(1.0202)">изображение</span>
<span class="t b" style="left:968.9px;top:283.00px;font-size:12px;line-height:14px;color:#f4f4f4;transform:scaleX(0.9351)">Доступность</span>
<span class="t" style="left:15.6px;top:158.00px;font-size:10px;line-height:11px;color:#ffffff;transform:scaleX(0.9913)">0:03</span>
<span class="t b" style="left:173.9px;top:256.00px;font-size:10.5px;line-height:12px;color:#ffffff;transform:scaleX(0.8086)">1</span>
<span class="t r" style="left:39.3px;top:198.00px;font-size:7.6px;line-height:9px;color:#222;transform:scaleX(1.0261)">Нажмите, чтобы добавить надпись</span>
<span class="t r" style="left:454.4px;top:277.00px;font-size:16px;line-height:17px;color:#000;transform:scaleX(1.0138)">Нажмите, чтобы добавить надпись</span>
<span class="t" style="left:522.2px;top:304.00px;font-size:6px;line-height:6px;color:#333;transform:scaleX(1.0869)">Нажмите, чтобы добавить субтитр</span>
<span class="t sb" style="left:5.4px;top:444.00px;font-size:11.5px;line-height:12px;color:#f0f0f0;transform:scaleX(1.0219)">ШКАЛА</span>
<span class="t sb" style="left:50.3px;top:444.00px;font-size:11.5px;line-height:12px;color:#f0f0f0;transform:scaleX(0.8739)">ВРЕМЕНИ</span>
<span class="t" style="left:18.0px;top:474.00px;font-size:12px;line-height:14px;color:#f4f4f4;transform:scaleX(0.9651)">Основная</span>
<span class="t" style="left:75.8px;top:474.00px;font-size:12px;line-height:14px;color:#f4f4f4;transform:scaleX(0.9380)">шкала</span>
<span class="t" style="left:112.7px;top:474.00px;font-size:12px;line-height:14px;color:#f4f4f4;transform:scaleX(0.8724)">в...</span>
<span class="t" style="left:18.0px;top:502.00px;font-size:12px;line-height:14px;color:#f4f4f4;transform:scaleX(0.9377)">Слайд</span>
<span class="t" style="left:18.0px;top:524.00px;font-size:12px;line-height:14px;color:#f4f4f4;transform:scaleX(0.9787)">Место</span>
<span class="t" style="left:56.2px;top:524.00px;font-size:12px;line-height:14px;color:#f4f4f4;transform:scaleX(0.9715)">размещения</span>
<span class="t" style="left:126.8px;top:524.00px;font-size:12px;line-height:14px;color:#f4f4f4;transform:scaleX(0.9389)">те...</span>
<span class="t" style="left:18.0px;top:546.00px;font-size:12px;line-height:14px;color:#f4f4f4;transform:scaleX(0.9787)">Место</span>
<span class="t" style="left:56.2px;top:546.00px;font-size:12px;line-height:14px;color:#f4f4f4;transform:scaleX(0.9715)">размещения</span>
<span class="t" style="left:126.8px;top:546.00px;font-size:12px;line-height:14px;color:#f4f4f4;transform:scaleX(0.9651)">на...</span>
<span class="t r" style="left:212.1px;top:470.00px;font-size:12px;line-height:14px;color:#f4f4f4;transform:scaleX(0.9886)">0:00</span>
<span class="t r" style="left:251.8px;top:470.00px;font-size:12px;line-height:14px;color:#f4f4f4;transform:scaleX(0.9933)">0:01</span>
<span class="t r" style="left:301.8px;top:470.00px;font-size:12px;line-height:14px;color:#f4f4f4;transform:scaleX(0.9933)">0:02</span>
<span class="t r" style="left:351.8px;top:470.00px;font-size:12px;line-height:14px;color:#f4f4f4;transform:scaleX(0.9933)">0:03</span>
<span class="t r" style="left:401.8px;top:470.00px;font-size:12px;line-height:14px;color:#f4f4f4;transform:scaleX(0.9933)">0:04</span>
<span class="t r" style="left:451.8px;top:470.00px;font-size:12px;line-height:14px;color:#f4f4f4;transform:scaleX(0.9933)">0:05</span>
<span class="t r" style="left:501.8px;top:470.00px;font-size:12px;line-height:14px;color:#f4f4f4;transform:scaleX(0.9933)">0:06</span>
<span class="t r" style="left:551.8px;top:470.00px;font-size:12px;line-height:14px;color:#f4f4f4;transform:scaleX(0.9933)">0:07</span>
<span class="t r" style="left:601.8px;top:470.00px;font-size:12px;line-height:14px;color:#f4f4f4;transform:scaleX(0.9933)">0:08</span>
<span class="t r" style="left:651.8px;top:470.00px;font-size:12px;line-height:14px;color:#f4f4f4;transform:scaleX(0.9933)">0:09</span>
<span class="t r" style="left:701.8px;top:470.00px;font-size:12px;line-height:14px;color:#f4f4f4;transform:scaleX(0.9933)">0:10</span>
<span class="t r" style="left:751.8px;top:470.00px;font-size:12px;line-height:14px;color:#f4f4f4;transform:scaleX(1.0148)">0:11</span>
<span class="t r" style="left:801.8px;top:470.00px;font-size:12px;line-height:14px;color:#f4f4f4;transform:scaleX(0.9933)">0:12</span>
<span class="t r" style="left:851.8px;top:470.00px;font-size:12px;line-height:14px;color:#f4f4f4;transform:scaleX(0.9933)">0:13</span>
<span class="t r" style="left:901.8px;top:470.00px;font-size:12px;line-height:14px;color:#f4f4f4;transform:scaleX(0.9933)">0:14</span>
<span class="t" style="left:5.9px;top:579.00px;font-size:12px;line-height:14px;color:#f4f4f4;transform:scaleX(0.9314)">Слайд: 1 из 1</span>
<span class="t" style="left:885.3px;top:580.00px;font-size:12px;line-height:14px;color:#f4f4f4;transform:scaleX(1.0060)">Русский</span>
<span class="t" style="left:1173.7px;top:580.00px;font-size:12px;line-height:14px;color:#f4f4f4;transform:scaleX(0.9488)">27%</span>
</body></html>
